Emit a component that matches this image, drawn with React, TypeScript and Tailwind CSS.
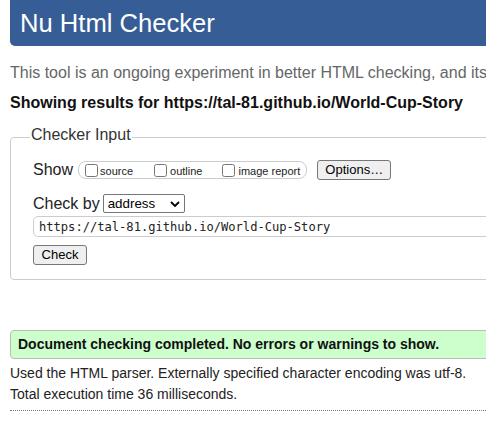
export default function App() {
  return (
    <div className="w-[486px] h-[431px] overflow-hidden bg-white text-[#222] font-['Liberation_Sans',Arial,sans-serif]">
      <div className="ml-[10px] w-[500px] h-[46px] bg-[#365d95] rounded-bl-[5px] flex items-center pl-[10px]">
        <h1 className="text-[25.6px] leading-[30px] text-white font-normal">Nu Html Checker</h1>
      </div>

      <p className="ml-[10px] mt-[17px] text-[16px] leading-[20px] text-[#666] whitespace-nowrap">
        This tool is an ongoing experiment in better HTML checking, and its
      </p>
      <p className="ml-[10px] mt-[10px] text-[16px] leading-[20px] font-bold text-[#111] whitespace-nowrap">
        Showing results for https://tal-81.github.io/World-Cup-Story
      </p>

      <fieldset className="ml-[10px] mt-[10px] w-[520px] border border-[#ccc] rounded-[4px] px-[22px] pt-[8px] pb-[14px]">
        <legend className="-ml-[3px] px-[1px] pb-[5px] text-[16px] text-[#333]">Checker Input</legend>

        <div className="flex items-center h-[20px]">
          <span className="text-[16px] text-[#222]">Show</span>
          <div className="ml-[5px] h-[18px] border border-[#ccc] rounded-[8px] flex items-center pl-[6px] pr-[6px] text-[11px] text-[#222]">
            <label className="flex items-center">
              <input type="checkbox" className="m-0 w-[13px] h-[13px]" />
              <span className="ml-[2px] mt-[2px]">source</span>
            </label>
            <label className="flex items-center ml-[21px]">
              <input type="checkbox" className="m-0 w-[13px] h-[13px]" />
              <span className="ml-[3px] mt-[2px]">outline</span>
            </label>
            <label className="flex items-center ml-[20px]">
              <input type="checkbox" className="m-0 w-[13px] h-[13px]" />
              <span className="ml-[3px] mt-[2px]">image report</span>
            </label>
          </div>
          <button className="ml-[10px] w-[74px] h-[20px] bg-[#efefef] border border-[#767676] rounded-[3px] text-[13px] leading-[18px] text-black">
            Options…
          </button>
        </div>

        <div className="flex items-center mt-[14px] h-[19px]">
          <span className="text-[16px] text-[#222]">Check by</span>
          <div className="ml-[3px] w-[82px] h-[19px] border border-[#767676] rounded-[2px] bg-white flex items-center justify-between pl-[4px] pr-[4px] text-[13.33px] text-black">
            <span>address</span>
            <svg width="10" height="6" viewBox="0 0 10 6" fill="none">
              <path d="M1 1l4 4 4-4" stroke="#000" strokeWidth="1.8" />
            </svg>
          </div>
        </div>

        <input
          readOnly
          value="https://tal-81.github.io/World-Cup-Story"
          className="mt-[3px] block w-full h-[21px] border border-[#ccc] rounded-[5px] pl-[5px] text-[12.1px] text-[#222] font-['DejaVu_Sans_Mono',monospace] outline-none"
        />

        <button className="mt-[8px] block w-[54px] h-[20px] bg-[#efefef] border border-[#767676] rounded-[3px] text-[13px] leading-[18px] text-black">
          Check
        </button>
      </fieldset>

      <div className="ml-[10px] mt-[50px] w-[520px] h-[29px] bg-[#ccffcc] border border-[#bbb] rounded-[4px] flex items-center pl-[7px]">
        <p className="text-[14px] font-bold text-[#111]">Document checking completed. No errors or warnings to show.</p>
      </div>

      <p className="ml-[10px] mt-[4px] text-[14px] leading-[21px] text-[#222]">
        Used the HTML parser. Externally specified character encoding was utf-8.
      </p>
      <p className="ml-[10px] text-[14px] leading-[21px] text-[#222]">Total execution time 36 milliseconds.</p>

      <div className="ml-[10px] mt-[5px] w-[500px] border-t border-dotted border-[#777]" />
    </div>
  );
}
